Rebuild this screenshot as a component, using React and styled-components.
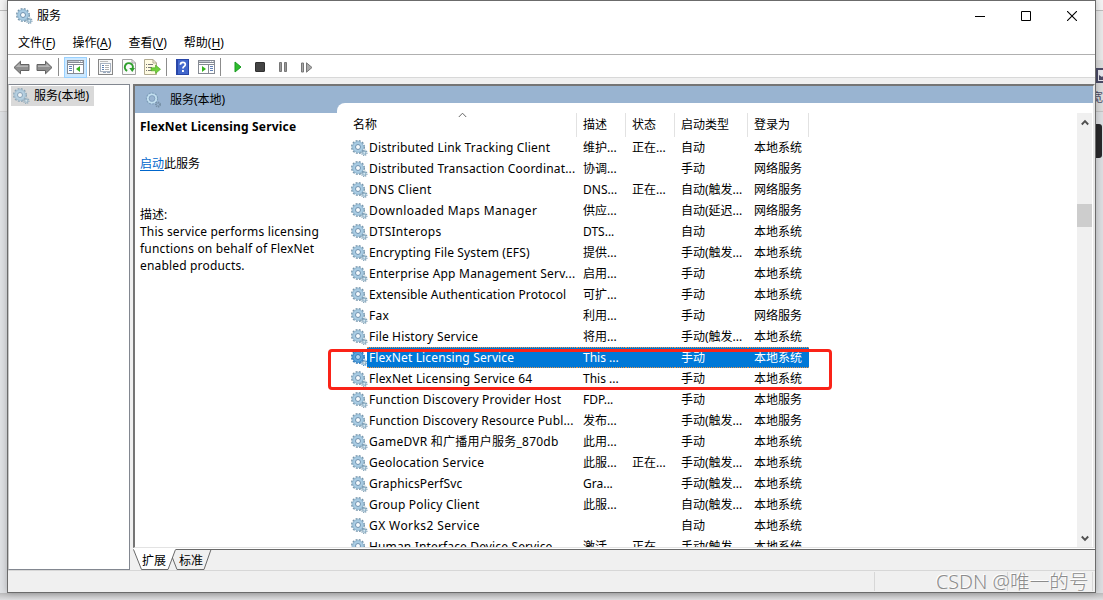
import React, { useState } from 'react';
import styled, { createGlobalStyle, css } from 'styled-components';

const GlobalStyle = createGlobalStyle`
  * {
    box-sizing: border-box;
  }
  body {
    margin: 0;
    overflow: hidden;
    font-family: "Noto Sans", "Noto Sans CJK SC", sans-serif;
    font-size: 12px;
    color: #000;
  }
  svg {
    display: block;
    flex: none;
  }
`;

const Desktop = styled.div`
  position: relative;
  display: grid;
  grid-template-columns: 7px 1089px 7px;
  grid-template-rows: 593px 7px;
  width: 1103px;
  height: 600px;
  background: #e2e2e4;
`;

const Strip = styled.div`
  display: flex;
  flex-direction: column;
  overflow: hidden;
`;

const StripPart = styled.div`
  flex: none;
  height: ${(p) => p.$h}px;
  background: ${(p) => p.$bg};
  border-bottom: ${(p) => (p.$line ? `1px solid ${p.$line}` : 'none')};
  overflow: hidden;
  white-space: nowrap;
`;

const DarkTab = styled.div`
  width: 6px;
  height: 34px;
  background: #29292b;
  border-radius: 0 3px 3px 0;
`;

const CutWord = styled.div`
  margin-left: -5px;
  font-size: 12px;
  line-height: 24px;
  color: #4b4b66;
`;

const BottomStrip = styled.div`
  grid-column: 1 / 4;
  background: linear-gradient(#bcbcbd, #dedee0);
`;

const Window = styled.div`
  display: flex;
  flex-direction: column;
  height: 593px;
  border: 1px solid #6b6b6b;
  background: #f0f0f0;
  box-shadow: 0 0 7px rgba(0, 0, 0, 0.25);
  z-index: 1;
`;

const TitleBar = styled.div`
  display: flex;
  align-items: center;
  height: 29px;
  padding-left: 8px;
  background: #fff;
`;

const Title = styled.div`
  flex: 1;
  padding-left: 4px;
  line-height: 28px;
`;

const WindowButton = styled.div`
  display: flex;
  justify-content: center;
  width: 46px;
`;

const MenuBar = styled.div`
  display: flex;
  gap: 17px;
  height: 25px;
  padding: 1px 0 0 10px;
  background: #fff;
  border-bottom: 1px solid #b0b0b0;
  line-height: 23px;
`;

const MenuItem = styled.div`
  white-space: nowrap;
  u {
    text-underline-offset: 2px;
  }
`;

const ToolBar = styled.div`
  display: flex;
  align-items: center;
  height: 23px;
  padding: 2px 0 0 4px;
  background: #fff;
  border-bottom: 1px solid #d8d8d8;
`;

const Tool = styled.div`
  display: flex;
  align-items: center;
  justify-content: center;
  width: ${(p) => p.$w || 23}px;
  height: 20px;
  ${(p) =>
    p.$active &&
    css`
      height: 21px;
      background: #cce8ff;
      border: 1px solid #99d1ff;
    `}
`;

const Separator = styled.div`
  width: 1px;
  height: 18px;
  margin: 0 ${(p) => p.$right}px 0 ${(p) => p.$left}px;
  background: #8c8c8c;
`;

const Content = styled.div`
  display: flex;
  height: 492px;
  padding-top: 6px;
`;

const Tree = styled.div`
  width: 122px;
  height: 486px;
  border: 1px solid #828790;
  border-left-color: #c8c8c8;
  background: #fff;
`;

const TreeItem = styled.div`
  display: flex;
  align-items: center;
  width: 83px;
  height: 20px;
  margin: 1px 0 0 2px;
  padding-left: 2px;
  background: #d9d9d9;
  white-space: nowrap;
  span {
    padding-left: 4px;
    line-height: 18px;
  }
`;

const Right = styled.div`
  display: flex;
  flex-direction: column;
  width: 962px;
  margin-left: 3px;
`;

const Panel = styled.div`
  display: flex;
  height: 464px;
  border-top: 2px solid #757575;
  border-left: 2px solid #757575;
  border-right: 2px solid #e8e8e8;
  border-bottom: 1px solid #e3e3e3;
  background: #99b4d1;
  overflow: hidden;
`;

const Detail = styled.div`
  display: flex;
  flex-direction: column;
  width: 202px;
`;

const DetailHead = styled.div`
  display: flex;
  align-items: center;
  height: 27px;
  padding-left: 10px;
  span {
    padding-left: 8px;
    line-height: 26px;
  }
`;

const DetailBody = styled.div`
  flex: 1;
  padding: 5px 0 0 5px;
  background: #fff;
  line-height: 17px;
  white-space: nowrap;
`;

const ServiceName = styled.div`
  font-weight: 700;
  letter-spacing: 0.18px;
`;

const ActionLine = styled.div`
  margin: 20px 0 34px;
  a {
    color: #0066cc;
    text-decoration: underline;
    text-underline-offset: 2px;
  }
`;

const Description = styled.div`
  letter-spacing: 0.17px;
`;

const List = styled.div`
  display: flex;
  flex: 1;
  margin-top: 17px;
  background: #fff;
  border-radius: 8px 0 0 0;
`;

const Table = styled.div`
  flex: 1;
  height: 444px;
  overflow: hidden;
`;

const columns = css`
  display: grid;
  grid-template-columns: 240px 49px 49px 73px 61px;
`;

const HeaderRow = styled.div`
  ${columns}
  height: 34px;
  padding-top: 10px;
`;

const HeaderCell = styled.div`
  position: relative;
  height: 24px;
  padding-left: ${(p) => (p.$first ? 16 : 6)}px;
  border-right: 1px solid #e2e2e2;
  line-height: 24px;
`;

const SortMark = styled.svg`
  position: absolute;
  left: 121px;
  top: -1px;
`;

const Row = styled.div`
  ${columns}
  height: 21px;
  white-space: nowrap;
  color: ${(p) => (p.$selected ? '#fff' : '#000')};
`;

const cellFill = css`
  background: ${(p) => (p.$selected ? '#0078d7' : 'transparent')};
  border: 0 dotted #e8964c;
  border-width: ${(p) => (p.$selected ? '1px 0' : 0)};
  line-height: ${(p) => (p.$selected ? 19 : 21)}px;
`;

const Cell = styled.div`
  padding-left: 6px;
  ${cellFill}
`;

const NameCell = styled.div`
  display: flex;
  align-items: center;
  padding-left: 14px;
`;

const Name = styled.div`
  flex: 1;
  height: 21px;
  margin-left: -1px;
  padding-left: 2px;
  letter-spacing: ${(p) => p.$track}px;
  ${cellFill}
`;

const ScrollBar = styled.div`
  display: flex;
  flex-direction: column;
  align-items: center;
  width: 15px;
  height: 434px;
  margin: 10px 1px 0 0;
  padding: 6px 0 5px;
  background: #f0f0f0;
`;

const Thumb = styled.div`
  width: 15px;
  height: 23px;
  margin: 78px 0 auto;
  background: #cdcdcd;
`;

const TabBar = styled.div`
  flex: none;
  height: 22px;
  padding-top: 1px;
  background: linear-gradient(#fff 1px, #f0f0f0 1px);
`;

const TabStrip = styled.div`
  position: relative;
  display: flex;
  height: 21px;
  border-top: 1px solid #696969;
  svg {
    position: absolute;
    left: 0;
    top: -1px;
  }
  span {
    position: relative;
    padding-left: 9px;
    width: 37px;
    line-height: 21px;
    white-space: nowrap;
  }
`;

const StatusBar = styled.div`
  display: flex;
  justify-content: flex-end;
  height: 22px;
  padding-right: 2px;
  border-top: 1px solid #d7d7d7;
`;

const StatusPart = styled.div`
  width: ${(p) => p.$w}px;
  height: 19px;
  margin-top: 1px;
  border-left: 1px solid #d7d7d7;
  &:last-child {
    border-right: 1px solid #d7d7d7;
  }
`;

const RedFrame = styled.div`
  position: absolute;
  left: 328px;
  top: 349px;
  width: 504px;
  height: 41px;
  border: 3px solid #fa2318;
  border-radius: 4px;
  z-index: 2;
`;

const Watermark = styled.div`
  position: absolute;
  left: 936px;
  top: 567px;
  z-index: 3;
  color: #8c8c8c;
  font-weight: 300;
  font-size: 19.7px;
  line-height: 30px;
  white-space: nowrap;
  text-shadow: -1px -1px 0 #fff;
`;

const Gear = ({ pale, selected }) => (
  <svg width="17" height="16" viewBox="0 0 17 16" fill="none" opacity={pale ? 0.75 : 1}>
    <circle cx="7" cy="7" r="6.1" stroke={selected ? '#2b75b5' : '#7695ab'} strokeWidth="1.8" strokeDasharray="1.9 1.3" />
    <circle cx="7" cy="7" r="4.1" stroke={selected ? '#5aa3dc' : '#a9cce3'} strokeWidth="3.2" />
    <circle cx="7" cy="7" r="5.3" stroke={selected ? '#2480c8' : '#8db2cc'} strokeWidth="0.7" />
    <circle cx="7" cy="7" r="2.5" fill={selected ? '#b5d8f2' : '#f7fbfd'} stroke={selected ? '#2a78b8' : '#6b8fae'} strokeWidth="1" />
    <circle cx="13.3" cy="12.7" r="2.6" stroke={selected ? '#3a86c4' : '#7899af'} strokeWidth="1.3" strokeDasharray="1.1 0.9" />
    <circle cx="13.3" cy="12.7" r="1.6" fill="#d8e9f2" stroke="#8baec4" strokeWidth="1.1" />
  </svg>
);

const PaleGear = () => (
  <svg width="17" height="16" viewBox="0 0 17 16" fill="none">
    <circle cx="7" cy="6.5" r="4.2" stroke="#c2dfef" strokeWidth="2.2" />
    <circle cx="7" cy="6.5" r="5.6" stroke="#7f9fba" strokeWidth="1.1" strokeDasharray="2 1.2" />
    <circle cx="7" cy="6.5" r="2.9" stroke="#7796b5" strokeWidth="0.7" />
    <circle cx="13" cy="12.5" r="2" stroke="#768fa5" strokeWidth="2" strokeDasharray="1.1 0.6" />
  </svg>
);

const Arrow = ({ flip }) => (
  <svg width="17" height="15" viewBox="0 0 17 15">
    <g transform={flip ? 'translate(17 0) scale(-1 1)' : undefined}>
      <path d="M1 7.5 7.5 1.2V4.5H16V10.5H7.5V13.8Z" fill="#8f8f8f" stroke="#626262" />
      <path d="M2.8 7 6.6 3.4V5.5H15V7Z" fill="#b5b5b5" />
    </g>
  </svg>
);

const PaneIcon = ({ play }) => (
  <svg width="17" height="14" viewBox="0 0 17 14" shapeRendering="crispEdges">
    <path d="M0 0H17V14H0Z" fill="#868b94" />
    <path d="M1 1H16V2H1Z" fill="#c4c9d1" />
    <path d="M1 3H16V4H1ZM1 5H16V13H1Z" fill="#fff" />
    <path d="M12 1H13V2H12ZM14 1H15V2H14Z" fill="#fff" />
    <path d={play ? 'M10 5H11V13H10Z' : 'M6 5H7V13H6Z'} fill="#868b94" />
    <path
      d={play ? 'M12 6H15V7H12ZM12 8H15V9H12ZM12 10H15V11H12Z' : 'M2 6H5V7H2ZM2 8H5V9H2ZM2 10H5V11H2Z'}
      fill="#6080b8"
    />
    <path
      d={play ? 'M4 6 8 9 4 12Z' : 'M13 6 9 9 13 12Z'}
      fill="#35b41d"
      shapeRendering="auto"
    />
  </svg>
);

const PropertiesIcon = () => (
  <svg width="15" height="16" viewBox="0 0 15 16" shapeRendering="crispEdges">
    <path d="M.5.5H14.5V15.5H.5Z" fill="#f7f7f7" stroke="#868686" />
    <path d="M2 2H10V3H2Z" fill="#bbb" />
    <path d="M2.5 4.5H12.5V12.5H2.5Z" fill="#fff" stroke="#a9b3c1" />
    <path d="M4 6H6V7H4ZM4 8H6V9H4ZM4 10H6V11H4Z" fill="#5d7fae" />
    <path d="M7 6H11V7H7ZM7 8H11V9H7ZM7 10H11V11H7Z" fill="#b0b0b0" />
    <path d="M5 13H8V14H5ZM9 13H12V14H9Z" fill="#9aaabf" />
  </svg>
);

const RefreshIcon = () => (
  <svg width="14" height="16" viewBox="0 0 14 16" fill="none">
    <path d="M.5.5H10L13.5 4V15.5H.5Z" fill="#fafafa" stroke="#a2a2a2" />
    <path d="M10 .5V4H13.5" stroke="#a2a2a2" />
    <path d="M5.2 11.8A4 4 0 1 1 10.6 9.5" stroke="#2e9f2c" strokeWidth="2" />
    <path d="M7.2 9H13L10.3 13Z" fill="#2e9f2c" />
  </svg>
);

const ExportIcon = () => (
  <svg width="17" height="16" viewBox="0 0 17 16">
    <path d="M.5.5H9L12.5 4V15.5H.5Z" fill="#fffbe2" stroke="#b0aa90" />
    <path d="M9 .5V4H12.5" fill="none" stroke="#b0aa90" />
    <path d="M2 5H3V6H2ZM2 8H3V9H2ZM2 11H3V12H2ZM4 5H9V6H4ZM4 8H8V9H4ZM4 11H8V12H4Z" fill="#777" />
    <path d="M7 8.8H11.5V6L16.5 10.3 11.5 14.5V11.8H7Z" fill="#72d13c" stroke="#46a51c" strokeWidth=".6" />
  </svg>
);

const HelpIcon = () => (
  <svg width="13" height="16" viewBox="0 0 13 16">
    <rect width="13" height="16" fill="#2846a8" />
    <rect x="2" y="1" width="10" height="14" fill="#4267cc" />
    <path d="M4.4 5.8Q4.4 3.3 6.9 3.3 9.3 3.3 9.3 5.4 9.3 6.6 8 7.5 6.9 8.2 6.9 9.6" fill="none" stroke="#fff" strokeWidth="1.7" />
    <path d="M6 11H7.9V13H6Z" fill="#fff" />
  </svg>
);

const Chevron = ({ down }) => (
  <svg width="8" height="7" viewBox="0 0 8 7" fill="none">
    <path d={down ? 'M.8 1.5 4 4.8 7.2 1.5' : 'M.8 5.5 4 2.2 7.2 5.5'} stroke="#505050" strokeWidth="1.9" />
  </svg>
);

// name, letter spacing of the name, description, state, startup type, log on as
const services = [
  ['Distributed Link Tracking Client', 0.17, '维护...', '正在...', '自动', '本地系统'],
  ['Distributed Transaction Coordinat...', 0.17, '协调...', '', '手动', '网络服务'],
  ['DNS Client', 0.28, 'DNS...', '正在...', '自动(触发...', '网络服务'],
  ['Downloaded Maps Manager', 0.4, '供应...', '', '自动(延迟...', '网络服务'],
  ['DTSInterops', 0.28, 'DTS...', '', '自动', '本地系统'],
  ['Encrypting File System (EFS)', 0.15, '提供...', '', '手动(触发...', '本地系统'],
  ['Enterprise App Management Serv...', 0.22, '启用...', '', '手动', '本地系统'],
  ['Extensible Authentication Protocol', 0.1, '可扩...', '', '手动', '本地系统'],
  ['Fax', 0.28, '利用...', '', '手动', '网络服务'],
  ['File History Service', 0.16, '将用...', '', '手动(触发...', '本地系统'],
  ['FlexNet Licensing Service', 0.14, 'This ...', '', '手动', '本地系统'],
  ['FlexNet Licensing Service 64', 0.17, 'This ...', '', '手动', '本地系统'],
  ['Function Discovery Provider Host', 0.19, 'FDP...', '', '手动', '本地服务'],
  ['Function Discovery Resource Publ...', 0.15, '发布...', '', '手动(触发...', '本地服务'],
  ['GameDVR 和广播用户服务_870db', 0.24, '此用...', '', '手动', '本地系统'],
  ['Geolocation Service', 0.23, '此服...', '正在...', '手动(触发...', '本地系统'],
  ['GraphicsPerfSvc', 0.15, 'Gra...', '', '手动(触发...', '本地系统'],
  ['Group Policy Client', 0.2, '此服...', '', '自动(触发...', '本地系统'],
  ['GX Works2 Service', 0.4, '', '', '自动', '本地系统'],
  ['Human Interface Device Service', 0.15, '激活...', '正在...', '手动(触发...', '本地系统'],
];

const menus = [
  ['文件', 'F'],
  ['操作', 'A'],
  ['查看', 'V'],
  ['帮助', 'H'],
];

const App = () => {
  const [selected, setSelected] = useState(10);

  return (
    <>
      <GlobalStyle />
      <Desktop>
        <Strip>
          <StripPart $h={11} $bg="#f3f3f3" $line="#bcbcbc" />
          <StripPart $h={49} $bg="#f2f2f2" />
          <StripPart $h={52} $bg="#e9e9ea" $line="#d2d2d3" />
          <StripPart $h={481} $bg="#dfe1e4" />
        </Strip>
        <Window>
          <TitleBar>
            <Gear />
            <Title>服务</Title>
            <WindowButton>
              <svg width="12" height="10" viewBox="0 0 12 10"><path d="M1 5.5H11" stroke="#000" /></svg>
            </WindowButton>
            <WindowButton>
              <svg width="10" height="10" viewBox="0 0 10 10"><path d="M.5.5H9.5V9.5H.5Z" stroke="#000" fill="none" /></svg>
            </WindowButton>
            <WindowButton>
              <svg width="10" height="10" viewBox="0 0 10 10"><path d="M0 0 10 10M10 0 0 10" stroke="#000" strokeWidth="1.1" /></svg>
            </WindowButton>
          </TitleBar>
          <MenuBar>
            {menus.map(([label, key]) => (
              <MenuItem key={key}>
                {label}(<u>{key}</u>)
              </MenuItem>
            ))}
          </MenuBar>
          <ToolBar>
            <Tool $w={18}><Arrow /></Tool>
            <Tool $w={28}><Arrow flip /></Tool>
            <Separator $left={0} $right={5} />
            <Tool $active $w={23}><PaneIcon /></Tool>
            <Separator $left={2} $right={4} />
            <Tool $w={23}><PropertiesIcon /></Tool>
            <Tool $w={24}><RefreshIcon /></Tool>
            <Tool $w={22}><ExportIcon /></Tool>
            <Separator $left={3} $right={3} />
            <Tool $w={24}><HelpIcon /></Tool>
            <Tool $w={24}><PaneIcon play /></Tool>
            <Separator $left={2} $right={6} />
            <Tool $w={22}>
              <svg width="8" height="12" viewBox="0 0 8 12"><path d="M1 1 7 6 1 11Z" fill="#2fbc2d" stroke="#189b20" /></svg>
            </Tool>
            <Tool $w={22}>
              <svg width="10" height="10" viewBox="0 0 10 10"><rect x=".5" y=".5" width="9" height="9" rx=".5" fill="#444" stroke="#303030" /></svg>
            </Tool>
            <Tool $w={24}>
              <svg width="8" height="10" viewBox="0 0 8 10"><path d="M.5.5H2.5V9.5H.5ZM5.5.5H7.5V9.5H5.5Z" fill="#999" stroke="#777" /></svg>
            </Tool>
            <Tool $w={24}>
              <svg width="12" height="11" viewBox="0 0 12 11"><path d="M.5 1H2.5V10H.5ZM5.5.8 11 5.5 5.5 10.2Z" fill="#aaa" stroke="#777" /></svg>
            </Tool>
          </ToolBar>
          <Content>
            <Tree>
              <TreeItem>
                <Gear pale />
                <span>服务(本地)</span>
              </TreeItem>
            </Tree>
            <Right>
              <Panel>
                <Detail>
                  <DetailHead>
                    <PaleGear />
                    <span>服务(本地)</span>
                  </DetailHead>
                  <DetailBody>
                    <ServiceName>FlexNet Licensing Service</ServiceName>
                    <ActionLine><a>启动</a>此服务</ActionLine>
                    <div>描述:</div>
                    <Description>
                      This service performs licensing<br />
                      functions on behalf of FlexNet<br />
                      enabled products.
                    </Description>
                  </DetailBody>
                </Detail>
                <List>
                  <Table>
                    <HeaderRow>
                      <HeaderCell $first>
                        名称
                        <SortMark width="9" height="6" viewBox="0 0 9 6"><path d="M.8 5 4.5 1.2 8.2 5" fill="none" stroke="#666" /></SortMark>
                      </HeaderCell>
                      <HeaderCell>描述</HeaderCell>
                      <HeaderCell>状态</HeaderCell>
                      <HeaderCell>启动类型</HeaderCell>
                      <HeaderCell>登录为</HeaderCell>
                    </HeaderRow>
                    {services.map(([name, track, ...rest], i) => (
                      <Row key={name} $selected={i === selected} onClick={() => setSelected(i)}>
                        <NameCell>
                          <Gear selected={i === selected} />
                          <Name $track={track} $selected={i === selected}>{name}</Name>
                        </NameCell>
                        {rest.map((text, j) => (
                          <Cell key={j} $selected={i === selected}>{text}</Cell>
                        ))}
                      </Row>
                    ))}
                  </Table>
                  <ScrollBar>
                    <Chevron />
                    <Thumb />
                    <Chevron down />
                  </ScrollBar>
                </List>
              </Panel>
              <TabBar>
                <TabStrip>
                  <svg width="80" height="21" viewBox="0 0 80 21">
                    <path d="M0 0 8.5 20.5H35L43 0Z" fill="#fff" />
                    <path d="M.5.5 8.5 20.5H35L42.5.5M39.5 9 44 20.5H71L78 .5" fill="none" stroke="#696969" />
                  </svg>
                  <span>扩展</span>
                  <span>标准</span>
                </TabStrip>
              </TabBar>
            </Right>
          </Content>
          <StatusBar>
            <StatusPart $w={133} />
            <StatusPart $w={86} />
          </StatusBar>
        </Window>
        <Strip>
          <StripPart $h={11} $bg="#f3f3f3" $line="#bcbcbc" />
          <StripPart $h={49} $bg="#e8e8e8" />
          <StripPart $h={8} $bg="#dcdcdc" />
          <StripPart $h={18} $bg="#dcdcdc">
            <svg width="15" height="15" viewBox="0 0 15 15"><path d="M1 1H14V14H1Z" fill="#e8e8ee" stroke="#4b4b66" strokeWidth="2" /><path d="M3 7 6 9 9 6V12H3Z" fill="#4b4b66" /></svg>
          </StripPart>
          <StripPart $h={26} $bg="#dcdcdc" $line="#c4c4c4"><CutWord>宽</CutWord></StripPart>
          <StripPart $h={12} $bg="#dcdee1" />
          <StripPart $h={34} $bg="#dcdee1"><DarkTab /></StripPart>
          <StripPart $h={435} $bg="#dcdee1" />
        </Strip>
        <BottomStrip />
        <RedFrame />
        <Watermark>CSDN @唯一的号</Watermark>
      </Desktop>
    </>
  );
};

export default App;
